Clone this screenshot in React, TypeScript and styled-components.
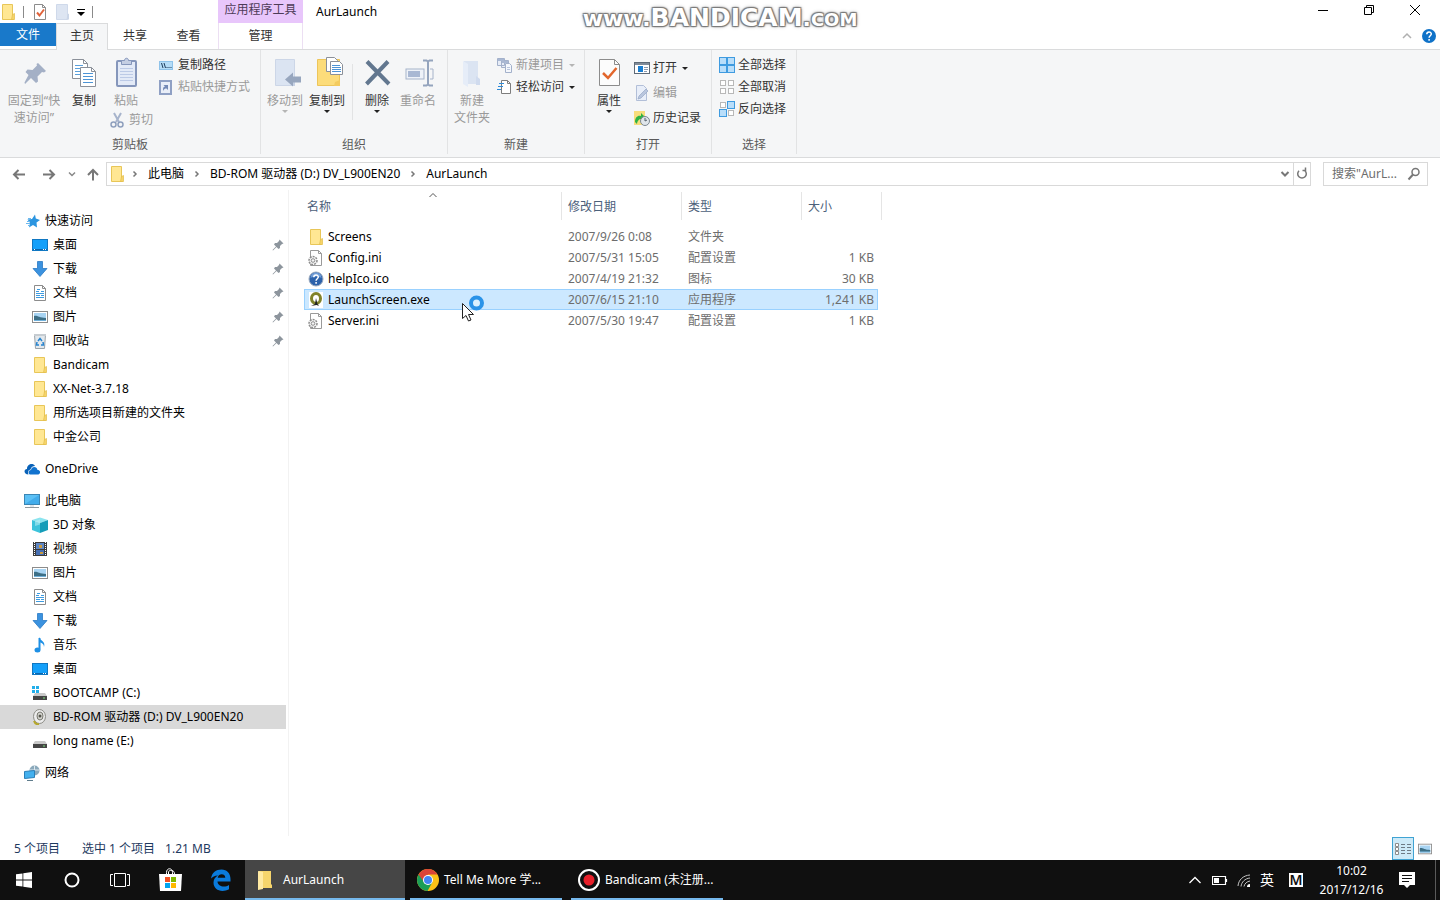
import React from "react";
import styled, { createGlobalStyle, css } from "styled-components";

const GlobalStyle = createGlobalStyle`
  *, *::before, *::after { box-sizing: border-box; }
  body {
    margin: 0;
    background: #fff;
    color: #000;
    font-family: "Noto Sans", "Noto Sans CJK SC", sans-serif;
    font-size: 12px;
    line-height: 16px;
    white-space: nowrap;
  }
  button, input { font: inherit; color: inherit; margin: 0; padding: 0; border: 0; background: none; }
  button { line-height: inherit; white-space: nowrap; }
  a { color: inherit; text-decoration: none; }
  svg { display: block; flex: none; }
  ul { list-style: none; margin: 0; padding: 0; }
`;

/* ---------- icons ---------- */

type IconProps = { size?: number };
type Shape = React.FC<IconProps>;

const icon = (box: number, body: React.ReactNode): Shape =>
  function Icon({ size = box }) {
    return (
      <svg width={size} height={size} viewBox={`0 0 ${box} ${box}`} fill="none" aria-hidden="true">
        {body}
      </svg>
    );
  };

const FolderIcon = icon(16, (
  <>
    <path d="M2.500.5h10v11l1 1v3h-11z" fill="#ffe793" stroke="#e8c658" />
    <path d="M12.500 10.500l2-1v6h-3z" fill="#f6d469" stroke="#e3bd4a" strokeWidth=".7" />
  </>
));
const FadedFolderIcon = icon(16, (
  <>
    <path d="M2.500.5h11v15h-11z" fill="#dde5f2" stroke="#cfd9ea" />
    <path d="M13.500 10.500l1.500-1v6h-2.500z" fill="#cbd6e8" />
  </>
));
const CheckDocIcon = icon(16, (
  <>
    <path d="M3.500.5h8l3 3v12h-11z" fill="#fff" stroke="#8c8c8c" />
    <path d="M11.500.5v3h3" stroke="#8c8c8c" />
    <path d="M6 8.500l2.500 3 4.500-6" stroke="#e0623a" strokeWidth="2" />
  </>
));
const PinLargeIcon = icon(32, (
  <path d="M20 6l8 8-2 1.500-2-.5-4.500 4.500.5 5-2 1.500-5-5L7 27l-.5-1.500L10.500 18l-3-3 2-2.500 5 .5 4.500-4.500-.5-1.500z" fill="#a4b0c6" />
));
const CopyIcon = icon(32, (
  <>
    <path d="M4.500 2.500h11l4 4v15h-15z" fill="#fff" stroke="#8b9099" />
    <path d="M15.500 2.500v4h4" stroke="#8b9099" />
    <path d="M7 8.500h8M7 11.500h8M7 14.500h8M7 17.500h8" stroke="#5aa0dc" />
    <path d="M12.500 10.500h11l4 4v15h-15z" fill="#fff" stroke="#8b9099" />
    <path d="M23.500 10.500v4h4" stroke="#8b9099" />
    <path d="M15 16.500h10M15 19.500h10M15 22.500h10M15 25.500h10" stroke="#4d94d6" />
  </>
));
const PasteIcon = icon(32, (
  <>
    <rect x="7" y="4" width="19" height="25" rx="1" fill="#e3eaf7" stroke="#8596bb" strokeWidth="2" />
    <path d="M11.500 3.500h3c0-3 4-3 4 0h3v4h-10z" fill="#c4cee3" stroke="#8596bb" />
    <path d="M10 11.500h13M10 14.500h13M10 17.500h13M10 20.500h13M10 23.500h13" stroke="#bccae6" />
  </>
));
const MoveToIcon = icon(32, (
  <>
    <path d="M6.500 2.500h19v26h-19z" fill="#dbe4f2" stroke="#ccd6e7" />
    <path d="M23 26l3-2v5h-4z" fill="#c6d1e4" />
    <path d="M16 22.500l8-7v4h8v6h-8v4z" fill="#97a6be" />
  </>
));
const CopyToIcon = icon(32, (
  <>
    <path d="M6.500 2.500h22v26h-22z" fill="#fcdc7a" stroke="#edc55a" />
    <path d="M24 25l5-2v6h-6z" fill="#f4cb5e" />
    <path d="M15.500.5h8l3 3v11h-11z" fill="#fff" stroke="#8b9099" />
    <path d="M19.500 4.500h9l3 3v10h-12z" fill="#fff" stroke="#8b9099" />
    <path d="M21 8.500h8M21 10.500h9M21 12.500h9M21 14.500h9" stroke="#4d94d6" />
  </>
));
const DeleteIcon = icon(32, (
  <path d="M6 4.500L28 27M27 4.500L5.500 27" stroke="#62778f" strokeWidth="4" />
));
const RenameIcon = icon(32, (
  <>
    <rect x="4" y="12" width="18" height="10" fill="#eef2f8" stroke="#a6b3ca" />
    <rect x="6" y="14" width="12" height="6" fill="#a9b8d3" />
    <path d="M21 3.500h3.500l1.500 1 1.500-1H31M21 28.500h3.500l1.500-1 1.500 1H31M26 4.500v23" stroke="#94a4bd" strokeWidth="2" />
    <path d="M28 12h3v10h-3" stroke="#a6b3ca" />
  </>
));
const NewFolderIcon = icon(32, (
  <>
    <path d="M8 4h14v23H8z" fill="#dbe4f2" />
    <path d="M7 4l5 3v23l-5-3z" fill="#e6edf8" />
    <path d="M20 19l4 3v6h-4z" fill="#d0dbee" />
  </>
));
const PropertiesIcon = icon(32, (
  <>
    <path d="M6.500 2.500h15l5 5v21h-20z" fill="#fcfcfc" stroke="#8c8c8c" />
    <path d="M21.500 2.500v5h5" stroke="#8c8c8c" />
    <path d="M10 16l5 5 8.500-10" stroke="#e2662c" strokeWidth="2.500" />
  </>
));
const PathIcon = icon(16, (
  <>
    <rect x=".5" y="4.500" width="13" height="8" fill="#b5dcf7" stroke="#8fc3ea" />
    <path d="M2.500 6l1.500 5M5 6l1.500 5M7.500 10.500h1M9.500 10.500h1M11.500 10.500h1" stroke="#1d3c5c" />
  </>
));
const ShortcutIcon = icon(16, (
  <>
    <rect x="1" y="2" width="11" height="13" fill="#e9eef8" stroke="#8fa0c4" strokeWidth="2" />
    <path d="M4 1h5v2H4z" fill="#8fa0c4" />
    <path d="M4 12c0-3 0-4 2-4.500L4.500 6H9v5L7.500 9.500C6 9.500 5 10 4 12z" fill="#7489b5" />
  </>
));
const ScissorsIcon = icon(16, (
  <>
    <path d="M4 1l5 9M11 1L6 10" stroke="#a7b4cc" strokeWidth="2" />
    <circle cx="3.500" cy="12.500" r="2.500" stroke="#8e9fbd" strokeWidth="1.500" />
    <circle cx="10.500" cy="12.500" r="2.500" stroke="#8e9fbd" strokeWidth="1.500" />
  </>
));
const NewItemIcon = icon(16, (
  <>
    <path d="M.5 1.500h7v7h-7zM4.500 3.500h7v7h-7z" fill="#e6ecf7" stroke="#a3b1cb" />
    <path d="M1 2h6v2H1zM5 4h6v2H5z" fill="#a9b8d3" />
    <path d="M8.500 6.500h4l2 2v7h-6z" fill="#f4f7fc" stroke="#a3b1cb" />
    <path d="M10 10.500h3M10 12.500h3" stroke="#b9c6de" />
  </>
));
const EasyAccessIcon = icon(16, (
  <>
    <path d="M4.500 1.500h6l3 3v10h-9z" fill="#fff" stroke="#7d7d7d" />
    <path d="M10.500 1.500v3h3" stroke="#7d7d7d" />
    <path d="M2 4.500h5M1 7.500h5M0 10.500h4" stroke="#2e8bd8" />
  </>
));
const OpenIcon = icon(16, (
  <>
    <rect x=".5" y="2.500" width="15" height="11" fill="#fff" stroke="#5e6a77" />
    <path d="M1 3h14v2H1z" fill="#7f8b98" />
    <rect x="4" y="6" width="5" height="6" fill="#1a7ed1" />
    <path d="M10 7.500h4M10 9.500h4M10 11.500h3" stroke="#8b9bb0" />
  </>
));
const EditIcon = icon(16, (
  <>
    <path d="M2.500.5h7l3 3v12h-10z" fill="#e8eef9" stroke="#b2bfd8" />
    <path d="M4 14l1-3 7-7 2 2-7 7z" fill="#b9c6de" stroke="#97a8c6" strokeWidth=".7" />
  </>
));
const HistoryIcon = icon(16, (
  <>
    <path d="M0 1h11v14H0z" fill="#f7dd7c" />
    <path d="M1 12c0-5 3-7 6-6V3l5 5-5 4V9c-2 0-4 2-4 5z" fill="#2fb344" />
    <circle cx="11" cy="11" r="4.500" fill="#dfe5ea" stroke="#7d8790" />
    <path d="M11 8v3l2-1" stroke="#55606a" />
  </>
));
const squares = (fills: boolean[]) =>
  [[0, 0], [8, 0], [0, 8], [8, 8]].map(([x, y], i) => (
    <rect
      key={i}
      x={x + (fills[i] ? 0.5 : 1.5)}
      y={y + (fills[i] ? 0.5 : 1.5)}
      width={fills[i] ? 7 : 5}
      height={fills[i] ? 7 : 5}
      fill={fills[i] ? "#b9defa" : "#fff"}
      stroke={fills[i] ? "#3f9be0" : "#b8b8b8"}
    />
  ));
const SelectAllIcon = icon(16, <>{squares([true, true, true, true])}</>);
const SelectNoneIcon = icon(16, <>{squares([false, false, false, false])}</>);
const InvertIcon = icon(16, <>{squares([false, true, true, false])}</>);

const StarIcon = icon(16, (
  <>
    <path d="M11 1.500l.8 4L16 7l-3.500 2.500.5 5-4-2.500-4 2.500 1-4.500L3.500 6.500l4.500-.5z" fill="#2b95e0" />
    <path d="M3 8.500h3M2 10.500h4M4 12.500h2M4 5.500h3" stroke="#6bb8ee" />
  </>
));
const DesktopIcon = icon(16, (
  <>
    <rect x=".5" y="2.500" width="15" height="11" fill="#14a0fa" stroke="#1077c2" />
    <path d="M1 12.500h14" stroke="#0b66ad" />
    <path d="M2 12.500h1M11 12.500h1M13 12.500h1" stroke="#fff" />
  </>
));
const DownloadIcon = icon(16, (
  <path d="M5.500.5h5v7h4.500L8 15.500 1 7.500h4.500z" fill="#3b92df" stroke="#2a7ac4" strokeWidth=".8" />
));
const DocumentIcon = icon(16, (
  <>
    <path d="M2.500.5h8l3 3v12h-11z" fill="#fff" stroke="#8c8c8c" />
    <path d="M10.500.5v3h3" stroke="#8c8c8c" />
    <path d="M4 6.500h3M5 4.500h3M9 6.500h3M4 8.500h8M4 10.500h4M9 10.500h3M4 12.500h8" stroke="#3d9be0" />
  </>
));
const PictureIcon = icon(16, (
  <>
    <rect x=".5" y="2.500" width="15" height="11" fill="#fff" stroke="#8c8c8c" />
    <path d="M2 4h12v8H2z" fill="#a8d4f3" />
    <path d="M2 7c3-1 5 2 12 2v2H2z" fill="#3d6f86" />
    <path d="M2 11h12v1H2z" fill="#6fb0da" />
  </>
));
const RecycleIcon = icon(16, (
  <>
    <path d="M2.500 1.500h11l-1 14h-9z" fill="#e3e8ec" stroke="#9aa3aa" />
    <path d="M2 1h12v2H2z" fill="#c6ccd1" />
    <path d="M6 8l2-2.500L10 8M11 9l.5 3H9M7 12H4.500L5 9" stroke="#2784cf" strokeWidth="1.500" />
  </>
));
const CloudIcon = icon(16, (
  <>
    <path d="M4.500 13.500C-.5 13.500-.5 8 3 8c0-5 6-6.500 8-3-2 0-4 1-4.500 3.500C4 9 3.500 11.500 4.500 13.500z" fill="#0a62b8" />
    <path d="M7 13.500c-3.500 0-3-4.500 0-4.500.5-4 6-4 6.500 0 3.500 0 3.500 4.500 0 4.500z" fill="#1173cf" />
  </>
));
const ComputerIcon = icon(16, (
  <>
    <rect x=".5" y="1.500" width="15" height="10" fill="#5bc0f5" stroke="#3a86b5" />
    <path d="M1 11L15 2v9z" fill="#42aceb" />
    <path d="M6 12h4v2H6z" fill="#dfe5e9" />
    <path d="M1 14.500h14" stroke="#8f999f" />
  </>
));
const CubeIcon = icon(16, (
  <>
    <path d="M0 3l8-2.500L16 3l-8 3z" fill="#8be4ef" />
    <path d="M0 3l8 3v10l-8-3z" fill="#3cc3db" />
    <path d="M16 3L8 6v10l8-3z" fill="#159db9" />
    <path d="M3 4l5-1.500v5L3 9z" fill="#c8f3f7" opacity=".5" />
  </>
));
const VideoIcon = icon(16, (
  <>
    <path d="M1 1h14v14H1z" fill="#3b3b3b" />
    <path d="M4 2h8v6H4z" fill="#5d86c4" />
    <path d="M4 9h8v5H4z" fill="#466fb3" />
    <path d="M7 4h3v3H7zM8 11h3v2H8z" fill="#c99a3d" />
    <path d="M2.500 1v14M13.500 1v14" stroke="#fff" strokeWidth="1" strokeDasharray="1 1" />
  </>
));
const MusicIcon = icon(16, (
  <>
    <path d="M7.500 1v11.500" stroke="#1e90e5" strokeWidth="2" />
    <ellipse cx="5.500" cy="13" rx="3" ry="2.500" fill="#1e90e5" />
    <path d="M7 0c1 4 7 4 5 10 0-3-2-4-5-5z" fill="#1e90e5" />
  </>
));
const drive = (
  <>
    <path d="M3 8h10l2 3H1z" fill="#c9c9c9" />
    <path d="M1 11h14v4H1z" fill="#454545" />
    <path d="M11 13h2" stroke="#7de07d" />
  </>
);
const DriveIcon = icon(16, drive);
const SystemDriveIcon = icon(16, (
  <>
    {drive}
    <path d="M0 1h3v3H0zM4 1h3v3H4zM0 5h3v3H0zM4 5h3v3H4z" fill="#22aeea" />
  </>
));
const DiscIcon = icon(16, (
  <>
    <ellipse cx="7.500" cy="7.500" rx="6" ry="7" fill="#ececec" stroke="#8c8c86" />
    <ellipse cx="8" cy="7" rx="3" ry="4" fill="#d5d5d0" stroke="#77776e" />
    <circle cx="8" cy="7" r="1.500" fill="#55554c" />
    <path d="M2 12c1 3 3 3.500 5 3" stroke="#b5a72c" strokeWidth="2" />
  </>
));
const NetworkIcon = icon(16, (
  <>
    <circle cx="10.500" cy="5.500" r="5" fill="#8ba9bb" />
    <path d="M6 5h9M10.500 1v9" stroke="#dbe7ee" />
    <path d="M.5 6.500l10-1v7l-10 1z" fill="#43b0ee" stroke="#2a7fb8" />
    <path d="M3 15.500h6" stroke="#5f7c8c" />
  </>
));
const IniIcon = icon(16, (
  <>
    <path d="M2.500.5h8l3 3v12h-11z" fill="#fff" stroke="#9a9a9a" />
    <path d="M10.500.5v3h3" stroke="#9a9a9a" />
    <circle cx="5" cy="10.500" r="4" fill="#f4f4f4" stroke="#8e8e8e" strokeWidth="1.500" strokeDasharray="2 1" />
    <circle cx="5" cy="10.500" r="1.800" stroke="#8e8e8e" />
  </>
));
const QuestionGlyph = (
  <path d="M5.800 6.300c0-3 4.500-3 4.500-.2 0 1.600-2.200 1.700-2.200 3.600M8.100 11v1.700" stroke="#fff" strokeWidth="1.500" />
);
const HelpFileIcon = icon(16, (
  <>
    <circle cx="8" cy="8" r="7" fill="#2c62ab" stroke="#9aa9bd" />
    <path d="M2.500 7a5.500 5.500 0 0111 0c-4-2-7-2-11 0z" fill="#6f9cd6" />
    {QuestionGlyph}
  </>
));
const HelpIcon = icon(16, (
  <>
    <circle cx="8" cy="8" r="7" fill="#0f72c8" />
    {QuestionGlyph}
  </>
));
const ExeIcon = icon(16, (
  <>
    <path d="M1 0h14v16H1z" fill="#fff" />
    <ellipse cx="8" cy="6.500" rx="4.500" ry="5" stroke="#80832a" strokeWidth="3" />
    <path d="M3 14l4-2 1-6 1.500 6 1.500 2-2.500-1z" fill="#222" />
  </>
));
const SmallPinIcon = icon(12, (
  <path d="M7.500.5l4 4-1.500.5L8 7v2L6.500 10 4.500 8 1 11.500 .5 11 4 7.500l-2-2L3 4h2l2-2z" fill="#8d959d" />
));

const BackIcon = icon(16, <path d="M14 8.500H3M7.500 4L3 8.500 7.500 13" stroke="#777" strokeWidth="2" />);
const ForwardIcon = icon(16, <path d="M2 8.500h11M8.500 4L13 8.500 8.500 13" stroke="#777" strokeWidth="2" />);
const UpIcon = icon(16, <path d="M8 14.500V4M3 9l5-5 5 5" stroke="#777" strokeWidth="2" />);
const TinyDownIcon = icon(8, <path d="M1 2.500L4 5.500l3-3" stroke="#888" strokeWidth="1.500" />);
const DownChevronIcon = icon(10, <path d="M1.500 3L5 6.500 8.500 3" stroke="#777" strokeWidth="2" />);
const CrumbIcon = icon(8, <path d="M2.500 1.500L5 4 2.500 6.500" stroke="#777" strokeWidth="1.500" />);
const RefreshIcon = icon(14, (
  <>
    <path d="M10 3.700A4.300 4.300 0 1 1 4 3.700" stroke="#777" strokeWidth="1.500" />
    <path d="M7.500 3.500h3v-3M3 2v0" stroke="#777" strokeWidth="1.500" />
  </>
));
const SearchIcon = icon(14, (
  <>
    <circle cx="8.500" cy="5" r="3.500" stroke="#777" strokeWidth="1.500" />
    <path d="M6 7.500l-4.500 5" stroke="#777" strokeWidth="2" />
  </>
));
const UpChevronIcon = icon(10, <path d="M1 7l4-4 4 4" stroke="#b0b0b0" strokeWidth="1.500" />);
const SortIcon = icon(8, <path d="M.5 6L4 2.500 7.500 6" stroke="#555" />);
const MinimizeIcon = icon(10, <path d="M0 5.500h10" stroke="#000" />);
const RestoreIcon = icon(10, <path d="M.5 2.500h7v7h-7zM2.500 2.500v-2h7v7h-2" stroke="#000" />);
const CloseIcon = icon(10, <path d="M0 0l10 10M10 0L0 10" stroke="#000" />);
const QuickMenuIcon = icon(8, (
  <>
    <path d="M0 1.500h8" stroke="#000" />
    <path d="M0 4h8L4 8z" fill="#000" />
  </>
));

const DetailsViewIcon = icon(16, (
  <>
    <path d="M.5 2.500h3v3h-3zM.5 6.500h3v3h-3zM.5 10.500h3v3h-3z" fill="#fff" stroke="#8c8c8c" />
    <path d="M6 3.500h4M12 3.500h4M6 6.500h4M12 6.500h4M6 9.500h4M12 9.500h4M6 12.500h4M12 12.500h4" stroke="#6d7a85" />
  </>
));
const WindowsIcon = icon(16, (
  <path d="M0 2.300l6.500-.9v6.200H0zM7.300 1.300L16 0v7.600H7.300zM0 8.400h6.500v6.200L0 13.700zM7.300 8.400H16V16l-8.700-1.200z" fill="#fff" />
));
const CortanaIcon = icon(16, <circle cx="8" cy="8" r="6.500" stroke="#fff" strokeWidth="2" />);
const TaskViewIcon = icon(20, (
  <path d="M4.500 3.500h11v13h-11zM3 4.500H.5v11H3M17 4.500h2.500v11H17" stroke="#fff" />
));
const StoreIcon = icon(24, (
  <>
    <path d="M8.500 6V4.500c0-5 6-5 6 0V6M10.500 6V4c0-2 6-3 6 2" stroke="#fff" />
    <path d="M1 6h23l-1 17H2z" fill="#fff" />
    <path d="M7 9h5v5H7z" fill="#f25022" />
    <path d="M13 9h5v5h-5z" fill="#7fba00" />
    <path d="M7 15h5v5H7z" fill="#00a4ef" />
    <path d="M13 15h5v5h-5z" fill="#ffb900" />
  </>
));
const EdgeIcon = icon(22, (
  <path d="M1 9.500C2 3.500 6 .5 11.500.5 17 .5 20.500 4.500 20.500 10v2.500H7.500c.3 5 7 6.500 11.500 3.500v4.300C11.500 24 3.500 21 3.500 13.500c0-3.200 2-5.700 4.500-7C4.500 6.500 2.500 8 1 9.500zM7.700 8.700h7.600c0-4.500-7-4.500-7.600 0z" fill="#0a7bdc" />
));
const TaskFolderIcon = icon(20, (
  <>
    <path d="M4 1h12v13l1 1v3H4z" fill="#f6d56c" />
    <path d="M3 1l5 1v17l-5 1z" fill="#ffeaa3" />
  </>
));
const ChromeIcon = icon(22, (
  <>
    <circle cx="11" cy="11" r="11" fill="#fbc116" />
    <path d="M11 11L1.500 5.500A11 11 0 0 0 10.500 22L15.500 13z" fill="#1b9e58" />
    <path d="M1.500 5.500A11 11 0 0 1 20.500 5.500H11L7 13z" fill="#da4437" />
    <circle cx="11" cy="11" r="5" fill="#fff" />
    <circle cx="11" cy="11" r="4" fill="#4285f4" />
  </>
));
const RecordIcon = icon(22, (
  <>
    <circle cx="11" cy="11" r="10" fill="#111" stroke="#fff" strokeWidth="2" />
    <circle cx="11" cy="11" r="5.500" fill="#e8202a" />
  </>
));
const TrayUpIcon = icon(12, <path d="M.5 9L6 3.500 11.500 9" stroke="#fff" strokeWidth="1.300" />);
const BatteryIcon = icon(16, (
  <>
    <path d="M.5 4.500h13v8H.5zM14.500 7v3" stroke="#fff" strokeWidth="1.200" />
    <path d="M2 6h5v5H2z" fill="#fff" />
  </>
));
const WifiIcon = icon(14, (
  <>
    <path d="M1 13C1.500 7 6 2.500 13 2M4 13.500c.5-4.500 4-8 9-8.500M7 13.500c.5-3 3-5 6-5.500" stroke="#c4c4c4" />
    <path d="M10 14c0-2 1-3 3-3v3z" fill="#fff" />
  </>
));
const NoticeIcon = icon(16, (
  <>
    <path d="M0 0h16v13h-5l-3 3-3-3H0z" fill="#fff" />
    <path d="M3 3.500h10M3 6.500h10M3 9.500h7" stroke="#101010" />
  </>
));

/* ---------- window frame ---------- */

const Screen = styled.div`
  position: relative;
  display: flex;
  flex-direction: column;
  min-height: 100vh;
`;

const Watermark = styled.div`
  position: absolute;
  top: 4px;
  left: 50%;
  transform: translateX(-50%);
  font-family: "DejaVu Sans", sans-serif;
  font-weight: 700;
  font-size: 22px;
  line-height: 28px;
  color: #fff;
  pointer-events: none;
  text-shadow: 1px 1px 1px #7a7a7a, -1px -1px 1px #7a7a7a, 1px -1px 1px #7a7a7a, -1px 1px 1px #7a7a7a, 0 0 4px #999;
  strong { font-size: 25px; }
  small { font-size: 18px; text-transform: uppercase; }
`;

const TitleBar = styled.header`
  display: flex;
  height: 23px;
`;

const QuickAccess = styled.div`
  display: flex;
  align-items: center;
  gap: 7px;
  width: 218px;
`;

const QuickButton = styled.button`
  display: flex;
  align-items: center;
`;

const Divider = styled.span`
  flex: none;
  width: 1px;
  height: 12px;
  background: #8a8a8a;
`;

const ContextLabel = styled.div`
  width: 85px;
  padding-top: 2px;
  text-align: center;
  background: #e8c6fb;
  color: #4d3b57;
`;

const WindowTitle = styled.h1`
  flex: 1;
  margin: 0;
  padding: 4px 0 0 13px;
  font-size: 12px;
  font-weight: 400;
`;

const WindowButton = styled.button`
  display: flex;
  align-items: center;
  justify-content: center;
  width: 46px;
  height: 20px;
  &:last-child { margin-right: 2px; }
`;

const TabBar = styled.div`
  display: flex;
  height: 27px;
  border-bottom: 1px solid #dadbdc;
`;

const Tab = styled.button<{ $kind?: "file" | "active" | "context"; $width: number }>`
  width: ${(p) => p.$width}px;
  height: 26px;
  padding-bottom: 1px;
  color: #333;
  ${(p) => p.$kind === "file" && css`
    height: 23px;
    padding: 1px 0 0;
    background: #1979ca;
    color: #fff;
  `}
  ${(p) => p.$kind === "active" && css`
    height: 27px;
    padding-bottom: 3px;
    background: #f5f6f7;
    border: 1px solid #dadbdc;
    border-bottom: 0;
  `}
  ${(p) => p.$kind === "context" && css`
    margin-left: 3px;
    border: solid #ecdff3;
    border-width: 0 1px;
  `}
`;

const TabActions = styled.div`
  display: flex;
  align-items: center;
  gap: 9px;
  margin-left: auto;
  padding-right: 3px;
`;

/* ---------- ribbon ---------- */

const Ribbon = styled.div`
  display: flex;
  height: 108px;
  padding: 0 0 3px;
  background: #f5f6f7;
  border-bottom: 1px solid #dadbdc;
`;

const Group = styled.section<{ $width: number }>`
  display: flex;
  flex-direction: column;
  width: ${(p) => p.$width}px;
  border-right: 1px solid #e2e3e4;
`;

const GroupBody = styled.div<{ $left: number }>`
  display: flex;
  height: 87px;
  padding: 4px 0 0 ${(p) => p.$left}px;
`;

const GroupLabel = styled.h2`
  margin: 0;
  font-size: 12px;
  font-weight: 400;
  line-height: 18px;
  text-align: center;
  color: #5a5a5a;
`;

const LargeButton = styled.button<{ $width: number }>`
  display: flex;
  flex-direction: column;
  align-items: center;
  flex: none;
  width: ${(p) => p.$width}px;
  padding-top: 3px;
  line-height: 17px;
  color: #333;
  svg:first-child { margin-bottom: 3px; }
  &:disabled { color: #9a9a9a; }
`;

const SmallButton = styled.button`
  display: flex;
  align-items: center;
  gap: 3px;
  height: 22px;
  color: #333;
  &:disabled { color: #9a9a9a; }
`;

const Stack = styled.div<{ $left?: number; $gap?: number; $top?: number }>`
  display: flex;
  flex-direction: column;
  align-items: flex-start;
  gap: ${(p) => p.$gap ?? 0}px;
  padding: ${(p) => p.$top ?? 0}px 0 0 ${(p) => p.$left ?? 0}px;
`;

const GroupDivider = styled(Divider)`
  height: 56px;
  margin: 10px 4px 0;
  background: #e2e3e4;
`;

const Arrow = styled.span<{ $faded?: boolean }>`
  margin-left: 2px;
  border: 3px solid transparent;
  border-top-color: ${(p) => (p.$faded ? "#b5b5b5" : "#222")};
  border-bottom: 0;
  ${LargeButton} & { margin: 1px 0 0; }
`;

/* ---------- address row ---------- */

const AddressRow = styled.div`
  display: flex;
  align-items: center;
  height: 32px;
  padding: 0 12px 0 4px;
`;

const NavButton = styled.button<{ $width: number }>`
  display: flex;
  align-items: center;
  justify-content: center;
  width: ${(p) => p.$width}px;
  height: 22px;
`;

const AddressBox = styled.div`
  display: flex;
  flex: 1;
  align-items: center;
  height: 24px;
  margin-right: 12px;
  padding-left: 2px;
  border: 1px solid #d9d9d9;
`;

const Crumbs = styled.nav`
  display: flex;
  flex: 1;
  align-items: center;
  gap: 9px;
  padding-left: 6px;
`;

const BoxButton = styled.button`
  display: flex;
  align-items: center;
  justify-content: center;
  width: 17px;
  height: 22px;
  & + & { border-left: 1px solid #d9d9d9; }
`;

const SearchBox = styled.label`
  display: flex;
  align-items: center;
  width: 105px;
  height: 24px;
  padding: 0 6px 0 8px;
  border: 1px solid #d9d9d9;
  input { flex: 1; min-width: 0; outline: 0; }
  input::placeholder { color: #6d6d6d; opacity: 1; }
`;

/* ---------- body ---------- */

const Body = styled.div`
  display: flex;
  flex: 1;
`;

const Sidebar = styled.nav`
  width: 289px;
  padding: 19px 2px 8px 0;
  border-right: 1px solid #f2f2f2;
`;

const Tree = styled.ul`
  & + & { margin-top: 8px; }
`;

const TreeLink = styled.a<{ $child?: boolean; $selected?: boolean }>`
  display: flex;
  align-items: center;
  gap: 5px;
  height: 24px;
  padding: 0 2px 0 ${(p) => (p.$child ? 32 : 24)}px;
  background: ${(p) => (p.$selected ? "#d9d9d9" : "none")};
  svg:last-child:not(:first-child) { margin-left: auto; }
`;

const Files = styled.main`
  flex: 1;
  padding-left: 15px;
`;

const FileTable = styled.table`
  width: 574px;
  table-layout: fixed;
  border-collapse: collapse;
  th, td { padding: 0; font-weight: 400; text-align: left; }
`;

const HeadCell = styled.th<{ $width: number; $indent: number }>`
  position: relative;
  width: ${(p) => p.$width}px;
  height: 36px;
  color: #4c607a;
  vertical-align: top;
  &&& { padding: 9px 0 0 ${(p) => p.$indent}px; }
  &::after {
    content: "";
    position: absolute;
    top: 2px;
    right: -1px;
    width: 1px;
    height: 28px;
    background: #e5e5e5;
  }
  &:last-child::after { right: -4px; }
`;

const SortMark = styled.span`
  position: absolute;
  top: 1px;
  left: 50%;
  transform: translateX(-50%);
`;

const FileRow = styled.tr<{ $selected?: boolean }>`
  height: 21px;
  ${(p) => p.$selected && css`
    background: #cce8ff;
    outline: 1px solid #99d1ff;
    outline-offset: -1px;
  `}
`;

const FileName = styled.div`
  position: relative;
  display: flex;
  align-items: center;
  gap: 4px;
  padding-left: 4px;
`;

const InfoCell = styled.td<{ $right?: boolean }>`
  color: #6d6d6d;
  &&& {
    padding: ${(p) => (p.$right ? "0 4px 0 0" : "0 0 0 7px")};
    text-align: ${(p) => (p.$right ? "right" : "left")};
  }
`;

const Pointer = styled.svg`
  position: absolute;
  top: 3px;
  left: 158px;
  z-index: 1;
`;

const StatusBar = styled.footer`
  display: flex;
  align-items: center;
  height: 24px;
  padding: 1px 4px 0 14px;
  color: #1e3a5f;
`;

const StatusText = styled.span<{ $gap?: number }>`
  margin-right: ${(p) => p.$gap ?? 0}px;
`;

const ViewButton = styled.button<{ $on?: boolean }>`
  display: flex;
  align-items: center;
  justify-content: center;
  width: 22px;
  height: 23px;
  ${(p) => p.$on && css`
    margin-left: auto;
    background: #cdeaf8;
    border: 1px solid #3fa3d3;
  `}
`;

/* ---------- taskbar ---------- */

const Taskbar = styled.div`
  display: flex;
  height: 40px;
  background: #101010;
  color: #fff;
`;

const TaskIcon = styled.button<{ $width: number }>`
  display: flex;
  align-items: center;
  justify-content: center;
  width: ${(p) => p.$width}px;
`;

const TaskButton = styled.button<{ $active?: boolean }>`
  display: flex;
  align-items: center;
  gap: ${(p) => (p.$active ? 8 : 5)}px;
  width: ${(p) => (p.$active ? 160 : 152)}px;
  padding: 2px 0 0 ${(p) => (p.$active ? 10 : 7)}px;
  background: ${(p) => (p.$active ? "#464646" : "none")};
  border-bottom: 2px solid #76b9ed;
  & + & { margin-left: 5px; }
  & + & + & { margin-left: 9px; }
`;

const Tray = styled.div`
  display: flex;
  align-items: center;
  margin-left: auto;
`;

const TrayButton = styled.button<{ $width: number }>`
  display: flex;
  align-items: center;
  justify-content: center;
  width: ${(p) => p.$width}px;
  height: 40px;
  font-size: 14px;
`;

const ImeBadge = styled.span`
  width: 14px;
  height: 14px;
  background: #fff;
  color: #101010;
  font-size: 14px;
  font-weight: 600;
  line-height: 14px;
  text-align: center;
`;

const Clock = styled.time`
  width: 75px;
  text-align: center;
  line-height: 19px;
`;

const ShowDesktop = styled.button`
  width: 5px;
  height: 40px;
  margin-left: 10px;
  border-left: 1px solid #5a5a5a;
`;

/* ---------- content ---------- */

type Item = { Icon: Shape; label: string; pinned?: boolean; selected?: boolean };

const folders = (...labels: string[]): Item[] => labels.map((label) => ({ Icon: FolderIcon, label }));

const tree: { root: Item; items: Item[] }[] = [
  {
    root: { Icon: StarIcon, label: "快速访问" },
    items: [
      { Icon: DesktopIcon, label: "桌面", pinned: true },
      { Icon: DownloadIcon, label: "下载", pinned: true },
      { Icon: DocumentIcon, label: "文档", pinned: true },
      { Icon: PictureIcon, label: "图片", pinned: true },
      { Icon: RecycleIcon, label: "回收站", pinned: true },
      ...folders("Bandicam", "XX-Net-3.7.18", "用所选项目新建的文件夹", "中金公司"),
    ],
  },
  { root: { Icon: CloudIcon, label: "OneDrive" }, items: [] },
  {
    root: { Icon: ComputerIcon, label: "此电脑" },
    items: [
      { Icon: CubeIcon, label: "3D 对象" },
      { Icon: VideoIcon, label: "视频" },
      { Icon: PictureIcon, label: "图片" },
      { Icon: DocumentIcon, label: "文档" },
      { Icon: DownloadIcon, label: "下载" },
      { Icon: MusicIcon, label: "音乐" },
      { Icon: DesktopIcon, label: "桌面" },
      { Icon: SystemDriveIcon, label: "BOOTCAMP (C:)" },
      { Icon: DiscIcon, label: "BD-ROM 驱动器 (D:) DV_L900EN20", selected: true },
      { Icon: DriveIcon, label: "long name (E:)" },
    ],
  },
  { root: { Icon: NetworkIcon, label: "网络" }, items: [] },
];

const files = [
  { Icon: FolderIcon, name: "Screens", date: "2007/9/26 0:08", type: "文件夹", size: "" },
  { Icon: IniIcon, name: "Config.ini", date: "2007/5/31 15:05", type: "配置设置", size: "1 KB" },
  { Icon: HelpFileIcon, name: "helpIco.ico", date: "2007/4/19 21:32", type: "图标", size: "30 KB" },
  { Icon: ExeIcon, name: "LaunchScreen.exe", date: "2007/6/15 21:10", type: "应用程序", size: "1,241 KB", selected: true },
  { Icon: IniIcon, name: "Server.ini", date: "2007/5/30 19:47", type: "配置设置", size: "1 KB" },
];

type LargeProps = { Icon: Shape; lines: string[]; width: number; disabled?: boolean; menu?: boolean };

const Large = ({ Icon, lines, width, disabled, menu }: LargeProps) => (
  <LargeButton $width={width} disabled={disabled}>
    <Icon />
    {lines.map((line) => <span key={line}>{line}</span>)}
    {menu && <Arrow $faded={disabled} />}
  </LargeButton>
);

type SmallProps = { Icon: Shape; label: string; disabled?: boolean; menu?: boolean };

const Small = ({ Icon, label, disabled, menu }: SmallProps) => (
  <SmallButton disabled={disabled}>
    <Icon />
    <span>{label}</span>
    {menu && <Arrow $faded={disabled} />}
  </SmallButton>
);

const TreeItem = ({ item, child }: { item: Item; child?: boolean }) => (
  <li>
    <TreeLink href="#" $child={child} $selected={item.selected}>
      <item.Icon />
      <span>{item.label}</span>
      {item.pinned && <SmallPinIcon />}
    </TreeLink>
  </li>
);

export default function App() {
  return (
    <>
      <GlobalStyle />
      <Screen>
        <TitleBar>
          <QuickAccess>
            <FolderIcon />
            <Divider />
            <QuickButton aria-label="属性"><CheckDocIcon /></QuickButton>
            <QuickButton aria-label="新建文件夹"><FadedFolderIcon /></QuickButton>
            <QuickButton aria-label="自定义快速访问工具栏"><QuickMenuIcon /></QuickButton>
            <Divider />
          </QuickAccess>
          <ContextLabel>应用程序工具</ContextLabel>
          <WindowTitle>AurLaunch</WindowTitle>
          <WindowButton aria-label="最小化"><MinimizeIcon /></WindowButton>
          <WindowButton aria-label="向下还原"><RestoreIcon /></WindowButton>
          <WindowButton aria-label="关闭"><CloseIcon /></WindowButton>
        </TitleBar>

        <TabBar>
          <Tab $kind="file" $width={56}>文件</Tab>
          <Tab $kind="active" $width={52}>主页</Tab>
          <Tab $width={54}>共享</Tab>
          <Tab $width={53}>查看</Tab>
          <Tab $kind="context" $width={85}>管理</Tab>
          <TabActions>
            <QuickButton aria-label="最小化功能区"><UpChevronIcon /></QuickButton>
            <QuickButton aria-label="帮助"><HelpIcon /></QuickButton>
          </TabActions>
        </TabBar>

        <Ribbon>
          <Group $width={261}>
            <GroupBody $left={4}>
              <Large Icon={PinLargeIcon} lines={["固定到“快", "速访问”"]} width={60} disabled />
              <Large Icon={CopyIcon} lines={["复制"]} width={40} />
              <Stack $left={6}>
                <Large Icon={PasteIcon} lines={["粘贴"]} width={32} disabled />
                <Small Icon={ScissorsIcon} label="剪切" disabled />
              </Stack>
              <Stack $left={6}>
                <Small Icon={PathIcon} label="复制路径" />
                <Small Icon={ShortcutIcon} label="粘贴快捷方式" disabled />
              </Stack>
            </GroupBody>
            <GroupLabel>剪贴板</GroupLabel>
          </Group>
          <Group $width={187}>
            <GroupBody $left={3}>
              <Large Icon={MoveToIcon} lines={["移动到"]} width={42} disabled menu />
              <Large Icon={CopyToIcon} lines={["复制到"]} width={42} menu />
              <GroupDivider />
              <Large Icon={DeleteIcon} lines={["删除"]} width={40} menu />
              <Large Icon={RenameIcon} lines={["重命名"]} width={42} disabled />
            </GroupBody>
            <GroupLabel>组织</GroupLabel>
          </Group>
          <Group $width={137}>
            <GroupBody $left={4}>
              <Large Icon={NewFolderIcon} lines={["新建", "文件夹"]} width={40} disabled />
              <Stack $left={5}>
                <Small Icon={NewItemIcon} label="新建项目" disabled menu />
                <Small Icon={EasyAccessIcon} label="轻松访问" menu />
              </Stack>
            </GroupBody>
            <GroupLabel>新建</GroupLabel>
          </Group>
          <Group $width={127}>
            <GroupBody $left={4}>
              <Large Icon={PropertiesIcon} lines={["属性"]} width={40} menu />
              <Stack $left={5} $gap={3} $top={3}>
                <Small Icon={OpenIcon} label="打开" menu />
                <Small Icon={EditIcon} label="编辑" disabled />
                <Small Icon={HistoryIcon} label="历史记录" />
              </Stack>
            </GroupBody>
            <GroupLabel>打开</GroupLabel>
          </Group>
          <Group $width={85}>
            <GroupBody $left={7}>
              <Stack>
                <Small Icon={SelectAllIcon} label="全部选择" />
                <Small Icon={SelectNoneIcon} label="全部取消" />
                <Small Icon={InvertIcon} label="反向选择" />
              </Stack>
            </GroupBody>
            <GroupLabel>选择</GroupLabel>
          </Group>
        </Ribbon>

        <AddressRow>
          <NavButton $width={30} aria-label="后退"><BackIcon /></NavButton>
          <NavButton $width={30} aria-label="前进"><ForwardIcon /></NavButton>
          <NavButton $width={16} aria-label="最近浏览的位置"><TinyDownIcon /></NavButton>
          <NavButton $width={26} aria-label="向上"><UpIcon /></NavButton>
          <AddressBox>
            <FolderIcon />
            <Crumbs aria-label="地址">
              <CrumbIcon />
              <a href="#">此电脑</a>
              <CrumbIcon />
              <a href="#">BD-ROM 驱动器 (D:) DV_L900EN20</a>
              <CrumbIcon />
              <a href="#">AurLaunch</a>
            </Crumbs>
            <BoxButton aria-label="以前的位置"><DownChevronIcon /></BoxButton>
            <BoxButton aria-label="刷新"><RefreshIcon /></BoxButton>
          </AddressBox>
          <SearchBox>
            <input type="text" aria-label="搜索" placeholder={'搜索"AurL...'} />
            <SearchIcon />
          </SearchBox>
        </AddressRow>

        <Body>
          <Sidebar>
            {tree.map(({ root, items }) => (
              <Tree key={root.label}>
                <TreeItem item={root} />
                {items.map((item) => <TreeItem key={item.label} item={item} child />)}
              </Tree>
            ))}
          </Sidebar>
          <Files>
            <FileTable>
              <thead>
                <tr>
                  <HeadCell $width={257} $indent={3}>
                    名称
                    <SortMark><SortIcon /></SortMark>
                  </HeadCell>
                  <HeadCell $width={120} $indent={7}>修改日期</HeadCell>
                  <HeadCell $width={120} $indent={7}>类型</HeadCell>
                  <HeadCell $width={77} $indent={7}>大小</HeadCell>
                </tr>
              </thead>
              <tbody>
                {files.map((file) => (
                  <FileRow key={file.name} $selected={file.selected}>
                    <td>
                      <FileName>
                        <file.Icon />
                        <span>{file.name}</span>
                        {file.selected && (
                          <Pointer width="24" height="28" viewBox="0 -4 24 28" fill="none">
                            <path d="M.5 4.500v15l3.500-3 2.500 5.500 2.500-1-2.500-5.500h5z" fill="#fff" stroke="#222" />
                            <circle cx="14.500" cy="4" r="5.500" fill="#d9f0ff" stroke="#2a93e8" strokeWidth="4" />
                          </Pointer>
                        )}
                      </FileName>
                    </td>
                    <InfoCell>{file.date}</InfoCell>
                    <InfoCell>{file.type}</InfoCell>
                    <InfoCell $right>{file.size}</InfoCell>
                  </FileRow>
                ))}
              </tbody>
            </FileTable>
          </Files>
        </Body>

        <StatusBar>
          <StatusText $gap={22}>5 个项目</StatusText>
          <StatusText $gap={10}>选中 1 个项目</StatusText>
          <StatusText>1.21 MB</StatusText>
          <ViewButton $on aria-label="详细信息"><DetailsViewIcon /></ViewButton>
          <ViewButton aria-label="大图标"><PictureIcon size={14} /></ViewButton>
        </StatusBar>

        <Taskbar>
          <TaskIcon $width={48} aria-label="开始"><WindowsIcon /></TaskIcon>
          <TaskIcon $width={48} aria-label="Cortana"><CortanaIcon /></TaskIcon>
          <TaskIcon $width={48} aria-label="任务视图"><TaskViewIcon /></TaskIcon>
          <TaskIcon $width={52} aria-label="Microsoft Store"><StoreIcon /></TaskIcon>
          <TaskIcon $width={49} aria-label="Microsoft Edge"><EdgeIcon /></TaskIcon>
          <TaskButton $active><TaskFolderIcon />AurLaunch</TaskButton>
          <TaskButton><ChromeIcon />Tell Me More 学...</TaskButton>
          <TaskButton><RecordIcon />Bandicam (未注册...</TaskButton>
          <Tray>
            <TrayButton $width={24} aria-label="显示隐藏的图标"><TrayUpIcon /></TrayButton>
            <TrayButton $width={25} aria-label="电源"><BatteryIcon /></TrayButton>
            <TrayButton $width={24} aria-label="网络连接"><WifiIcon /></TrayButton>
            <TrayButton $width={22}>英</TrayButton>
            <TrayButton $width={36}><ImeBadge>M</ImeBadge></TrayButton>
            <Clock>10:02<br />2017/12/16</Clock>
            <TrayButton $width={36} aria-label="操作中心"><NoticeIcon /></TrayButton>
            <ShowDesktop aria-label="显示桌面" />
          </Tray>
        </Taskbar>

        <Watermark>www.<strong>BANDICAM</strong>.<small>com</small></Watermark>
      </Screen>
    </>
  );
}
